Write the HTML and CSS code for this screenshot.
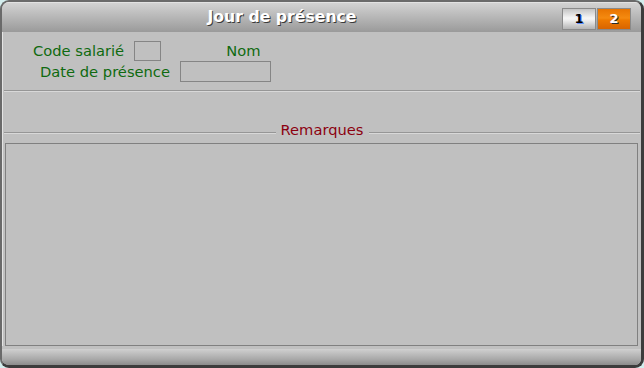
FILE: index.html
```html
<!DOCTYPE html>
<html lang="fr">
<head>
<meta charset="utf-8">
<title>Jour de présence</title>
<link rel="stylesheet" href="styles.css">
</head>
<body>
<div class="window">
  <div class="titlebar">
    <div class="title">Jour de présence</div>
    <div class="tabs">
      <div class="tab tab-off">1</div>
      <div class="tab tab-on">2</div>
    </div>
  </div>
  <div class="form">
    <div class="row row1">
      <span class="label">Code salarié</span>
      <span class="field field-code"></span>
      <span class="label label-nom">Nom</span>
    </div>
    <div class="row row2">
      <span class="label">Date de présence</span>
      <span class="field field-date"></span>
    </div>
  </div>
  <div class="sep"></div>
  <div class="legend">
    <span class="legend-line legend-left"></span>
    <span class="legend-text">Remarques</span>
    <span class="legend-line legend-right"></span>
  </div>
  <div class="memo"></div>
  <div class="bottombar"></div>
</div>
</body>
</html>
```

FILE: styles.css
```css
html, body {
  margin: 0;
  padding: 0;
  background: #d4eeee;
}

.window {
  width: 644px;
  height: 368px;
  box-sizing: border-box;
  border-style: solid;
  border-width: 2px 3px 3px 2px;
  border-color: #6a6a6a #3c3c3c #3c3c3c #6a6a6a;
  border-radius: 9px;
  background: #c0c0c0;
  display: flex;
  flex-direction: column;
  overflow: hidden;
  font-family: "DejaVu Sans", Verdana, sans-serif;
  box-shadow: inset 1px 1px 0 #e4e4e4;
}

.titlebar {
  height: 30px;
  flex: none;
  display: flex;
  background: linear-gradient(#e2e2e2 0, #e2e2e2 1px, #d2d2d2 1px, #9a9a9a 100%);
}

.title {
  flex: 1;
  text-align: center;
  color: #ffffff;
  font-weight: bold;
  font-size: 15.7px;
  line-height: 30px;
  text-shadow: 1px 1px 0 #3a3a3a;
}

.tabs {
  display: flex;
  gap: 1px;
  padding: 6px 10px 0 0;
}

.tab {
  width: 34px;
  height: 22px;
  box-sizing: border-box;
  border: 1px solid #8a8a8a;
  font-weight: bold;
  font-size: 13px;
  line-height: 20px;
  text-align: center;
}

.tab-off {
  color: #000000;
  background: linear-gradient(#c4c4c4 0%, #f6f6f6 45%, #f0f0f0 55%, #b4b4b4 100%);
  text-shadow: 1px 1px 0 #5a8cff;
}

.tab-on {
  color: #ffffff;
  background: linear-gradient(#e87400 0%, #f58a10 45%, #ee7a00 55%, #d86400 100%);
  text-shadow: 1px 1px 0 #2a2a2a;
}

.form {
  height: 50px;
  box-sizing: border-box;
  padding-top: 9px;
  flex: none;
}

.row {
  display: flex;
  align-items: center;
}

.row1 {
  height: 20px;
  padding-left: 31px;
}

.row2 {
  height: 21px;
  padding-left: 38px;
}

.label {
  color: #0f6a0f;
  font-size: 14.7px;
  line-height: 18px;
  white-space: nowrap;
}

.field {
  box-sizing: border-box;
  border: 1px solid #858585;
  background: #c0c0c0;
  margin-left: 10px;
}

.field-code {
  width: 27px;
  height: 20px;
}

.field-date {
  width: 91px;
  height: 21px;
}

.label-nom {
  margin-left: 65px;
}

.sep {
  flex: none;
  height: 0;
  margin: 8px 1px 0 2px;
  border-top: 1px solid #969696;
  border-bottom: 1px solid #d8d8d8;
}

.legend {
  flex: none;
  height: 20px;
  margin-top: 28px;
  display: flex;
  align-items: flex-start;
  padding: 0 1px 0 2px;
}

.legend-line {
  flex: 1;
  height: 0;
  margin-top: 12px;
  border-top: 1px solid #969696;
  border-bottom: 1px solid #d8d8d8;
}

.legend-text {
  color: #8c0010;
  font-size: 14.7px;
  line-height: 20px;
  padding: 0 5px;
}

.memo {
  flex: none;
  height: 203px;
  box-sizing: border-box;
  margin: 3px 3px 0 3px;
  border: 1px solid #808080;
  background: #c0c0c0;
}

.bottombar {
  flex: 1;
  background: linear-gradient(#c0c0c0 0, #c0c0c0 3px, #d0d0d0 3px, #a8a8a8 70%, #8c8c8c 100%);
}
```
